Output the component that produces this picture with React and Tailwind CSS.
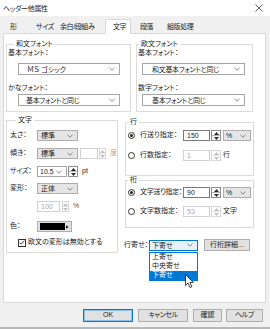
import React from "react";

const Chevron = ({ color = "#6b6b6b" }) => (
  <svg width="6" height="4" viewBox="0 0 6 4" className="shrink-0">
    <polyline points="0.5,0.8 3,3.2 5.5,0.8" fill="none" stroke={color} strokeWidth="0.8" />
  </svg>
);

function Select({ value, className = "", tone = "white" }) {
  const tones = {
    white: "bg-white border-[#a6a6a6]",
    gray: "bg-[#e5e5e5] border-[#adadad]",
    focus: "bg-[#e8f1fa] border-[#0078d7]",
  };
  return (
    <div className={`flex items-center border pr-[4px] ${tones[tone]} ${className}`}>
      <span className="min-w-0 flex-1 whitespace-nowrap text-left leading-none">{value}</span>
      <Chevron />
    </div>
  );
}

function Spin({ disabled = false, className = "" }) {
  const c = disabled ? "#c2c2c2" : "#2b2b2b";
  return (
    <div className={`flex flex-col border bg-white ${disabled ? "border-[#d6d6d6]" : "border-[#8f8f8f]"} ${className}`}>
      <div className={`flex flex-1 items-center justify-center border-b ${disabled ? "border-[#e2e2e2]" : "border-[#b5b5b5]"}`}>
        <svg width="5" height="3" viewBox="0 0 5 3"><polygon points="0,3 2.5,0 5,3" fill={c} /></svg>
      </div>
      <div className="flex flex-1 items-center justify-center">
        <svg width="5" height="3" viewBox="0 0 5 3"><polygon points="0,0 2.5,3 5,0" fill={c} /></svg>
      </div>
    </div>
  );
}

function Field({ value, disabled = false, className = "" }) {
  return (
    <div className={`flex items-center border bg-white pl-[3px] leading-none ${disabled ? "border-[#d0d0d0] text-[#a8a8a8]" : "border-[#7a7a7a] text-[#222]"} ${className}`}>
      {value}
    </div>
  );
}

function Radio({ checked = false }) {
  return (
    <span className="flex h-[7px] w-[7px] shrink-0 items-center justify-center rounded-full border border-[#333] bg-white">
      {checked && <span className="h-[3px] w-[3px] rounded-full bg-[#222]" />}
    </span>
  );
}

function Group({ title, className = "", legendClass = "ml-[6px]", children }) {
  return (
    <fieldset className={`border border-[#dcdcdc] ${className}`}>
      <legend className={`px-[2px] leading-[8px] ${legendClass}`}>{title}</legend>
      {children}
    </fieldset>
  );
}

export default function App() {
  const tabs = [
    { label: "形", cls: "w-[26px] pl-[6px]" },
    { label: "サイズ", cls: "w-[28px] pl-[6px]" },
    { label: "余白/段組み", cls: "w-[47px] pl-[2px]" },
    { label: "文字", cls: "w-[26px] pl-[7px]", active: true },
    { label: "段落", cls: "w-[30px] pl-[9px]" },
    { label: "組版処理", cls: "w-[42px] pl-[6px]" },
  ];

  return (
    <div className="flex h-[329px] w-[270px] flex-col border-b-2 border-[#b8b8b8] bg-[#f0f0f0] text-[7px] text-[#222] [font-family:'Liberation_Sans','Noto_Sans_CJK_JP',sans-serif] [font-feature-settings:'palt']">
      {/* title bar */}
      <div className="flex h-[16px] shrink-0 items-center justify-between bg-white pl-[3px] pr-[7px]">
        <span className="leading-none tracking-[-0.3px]">ヘッダー他属性</span>
        <svg width="8" height="8" viewBox="0 0 8 8">
          <path d="M0.5 0.5 L7.5 7.5 M7.5 0.5 L0.5 7.5" stroke="#333" strokeWidth="0.8" />
        </svg>
      </div>

      {/* tabs */}
      <div className="flex h-[17px] shrink-0 items-end pl-[4px] tracking-[-0.4px]">
        {tabs.map((t) =>
          t.active ? (
            <div key={t.label} className={`relative z-10 -mb-px flex h-[15px] items-center whitespace-nowrap border border-b-0 border-[#d9d9d9] bg-white ${t.cls}`}>
              {t.label}
            </div>
          ) : (
            <div key={t.label} className={`flex h-[12px] items-center whitespace-nowrap ${t.cls}`}>
              {t.label}
            </div>
          )
        )}
      </div>

      {/* panel */}
      <div className="ml-[3px] h-[270px] w-[263px] shrink-0 border border-[#d9d9d9] bg-white pl-[2px] pt-[6px]">
        {/* fonts */}
        <div className="flex gap-[5px]">
          <Group title="和文フォント" className="h-[72px] w-[125px] pl-[1px]">
            <div className="mt-[1px] leading-[8px]">基本フォント：</div>
            <Select value="ＭＳ ゴシック" className="ml-[10px] mt-[6px] h-[12px] w-[102px] pl-[8px]" />
            <div className="mt-[9px] leading-[8px]">かなフォント：</div>
            <Select value="基本フォントと同じ" className="ml-[10px] mt-[2px] h-[12px] w-[102px] pl-[7px] tracking-[-0.3px]" />
          </Group>
          <Group title="欧文フォント" legendClass="ml-[1px]" className="h-[72px] w-[117px] pl-[1px]">
            <div className="mt-[1px] leading-[8px]">基本フォント：</div>
            <Select value="和文基本フォントと同じ" className="ml-[4px] mt-[6px] h-[12px] w-[103px] pl-[9px] tracking-[-0.3px]" />
            <div className="mt-[9px] leading-[8px]">数字フォント：</div>
            <Select value="基本フォントと同じ" className="ml-[4px] mt-[2px] h-[12px] w-[103px] pl-[9px] tracking-[-0.3px]" />
          </Group>
        </div>

        <div className="mt-[4px] flex">
          {/* 文字 */}
          <Group title="文字" className="h-[137px] w-[111px] pl-[3px]">
            <div className="mt-[6px] flex h-[11px] items-center">
              <span className="w-[27px] whitespace-nowrap">太さ：</span>
              <Select value="標準" tone="gray" className="h-[11px] w-[41px] pl-[3px]" />
            </div>
            <div className="mt-[7px] flex h-[11px] items-center">
              <span className="w-[27px] whitespace-nowrap">傾き：</span>
              <Select value="標準" tone="gray" className="h-[11px] w-[41px] pl-[3px]" />
              <Field disabled className="ml-[2px] h-[11px] w-[18px]" />
              <Spin disabled className="ml-px h-[11px] w-[7px]" />
              <span className="ml-[4px] text-[#a8a8a8]">度</span>
            </div>
            <div className="mt-[7px] flex h-[11px] items-center">
              <span className="w-[27px] whitespace-nowrap tracking-[-0.3px]">サイズ：</span>
              <Select value="10.5" className="h-[11px] w-[30px] pl-[2px]" />
              <Spin className="ml-px h-[11px] w-[10px]" />
              <span className="ml-[4px]">pt</span>
            </div>
            <div className="mt-[6px] flex h-[11px] items-center">
              <span className="w-[27px] whitespace-nowrap">変形：</span>
              <Select value="正体" tone="gray" className="h-[11px] w-[41px] pl-[3px]" />
            </div>
            <div className="mt-[7px] flex h-[11px] items-center">
              <span className="w-[27px]" />
              <Field value="100" disabled className="h-[11px] w-[23px]" />
              <Spin disabled className="ml-[2px] h-[11px] w-[7px]" />
              <span className="ml-[4px] text-[#555]">%</span>
            </div>
            <div className="mt-[9px] flex h-[11px] items-center">
              <span className="w-[27px]">色：</span>
              <div className="flex h-[11px] w-[35px] items-center border border-[#adadad] bg-[#e1e1e1] px-[2px]">
                <div className="h-[7px] w-[28px] bg-black" />
                <svg width="3" height="4" viewBox="0 0 3 4" className="ml-[1px]"><polygon points="0,0 3,2 0,4" fill="#222" /></svg>
              </div>
            </div>
            <div className="mt-[6px] flex h-[9px] items-center pl-[8px]">
              <span className="flex h-[8px] w-[8px] items-center justify-center border border-[#333] bg-white">
                <svg width="6" height="5" viewBox="0 0 6 5"><polyline points="0.6,2.5 2.3,4.1 5.4,0.7" fill="none" stroke="#222" strokeWidth="0.9" /></svg>
              </span>
              <span className="ml-[2px] whitespace-nowrap">欧文の変形は無効とする</span>
            </div>
          </Group>

          {/* right column */}
          <div className="ml-[7px] flex flex-col pt-[2px]">
            <Group title="行" legendClass="ml-0" className="h-[58px] w-[129px] pl-[2px]">
              <div className="mt-[4px] flex h-[11px] items-center">
                <Radio checked />
                <span className="ml-[5px] w-[43px] whitespace-nowrap">行送り指定：</span>
                <Field value="150" className="h-[11px] w-[27px]" />
                <Spin className="ml-px h-[11px] w-[10px]" />
                <Select value="%" tone="gray" className="ml-[2px] h-[11px] w-[28px] pl-[2px]" />
              </div>
              <div className="mt-[9px] flex h-[11px] items-center">
                <Radio />
                <span className="ml-[5px] w-[43px] whitespace-nowrap">行数指定：</span>
                <Field value="1" disabled className="h-[11px] w-[27px]" />
                <Spin disabled className="ml-px h-[11px] w-[10px]" />
                <span className="ml-[2px]">行</span>
              </div>
            </Group>
            <Group title="桁" legendClass="ml-0" className="h-[52px] w-[129px] pl-[2px]">
              <div className="mt-[3px] flex h-[11px] items-center">
                <Radio checked />
                <span className="ml-[5px] w-[43px] whitespace-nowrap tracking-[-0.3px]">文字送り指定：</span>
                <Field value="90" className="h-[11px] w-[27px]" />
                <Spin className="ml-px h-[11px] w-[10px]" />
                <Select value="%" tone="gray" className="ml-[2px] h-[11px] w-[28px] pl-[2px]" />
              </div>
              <div className="mt-[8px] flex h-[11px] items-center">
                <Radio />
                <span className="ml-[5px] w-[43px] whitespace-nowrap">文字数指定：</span>
                <Field value="53" disabled className="h-[11px] w-[27px]" />
                <Spin disabled className="ml-px h-[11px] w-[10px]" />
                <span className="ml-[2px]">文字</span>
              </div>
            </Group>

            <div className="-ml-px mt-[11px] flex h-[12px] items-center">
              <span className="w-[25px] whitespace-nowrap">行寄せ：</span>
              <div className="relative">
                <Select value="下寄せ" tone="focus" className="h-[11px] w-[49px] pl-[2px]" />
                <div className="absolute left-0 top-[12px] z-20 flex h-[29px] w-[49px] flex-col border border-[#0078d7] bg-white">
                  <div className="flex h-[9px] items-center pl-[2px]">上寄せ</div>
                  <div className="flex h-[9px] items-center pl-[2px]">中央寄せ</div>
                  <div className="flex h-[9px] items-center bg-[#0078d7] pl-[2px] text-white">下寄せ</div>
                  <svg width="10" height="15" viewBox="0 0 10 15" className="absolute left-[35px] top-[21px]">
                    <path d="M0.5 0.5 L0.5 11.5 L3 9 L5 13.5 L6.8 12.7 L4.9 8.4 L8.3 8.4 Z" fill="white" stroke="#111" strokeWidth="0.8" strokeLinejoin="round" />
                  </svg>
                </div>
              </div>
              <div className="ml-[6px] flex h-[12px] w-[46px] items-center justify-center whitespace-nowrap border border-[#adadad] bg-[#e1e1e1]">
                行桁詳細...
              </div>
            </div>
          </div>
        </div>
      </div>

      {/* footer buttons */}
      <div className="flex justify-end gap-[5px] pr-[7px] pt-[6px]">
        <div className="flex h-[13px] w-[50px] items-center justify-center border border-[#0078d7] bg-[#e1e1e1] [box-shadow:inset_0_0_0_1px_#8ec0ec]">OK</div>
        <div className="flex h-[13px] w-[50px] items-center justify-center border border-[#adadad] bg-[#e1e1e1] tracking-[-0.5px]">キャンセル</div>
        <div className="flex h-[13px] w-[29px] items-center justify-center border border-[#adadad] bg-[#e1e1e1]">確認</div>
        <div className="ml-[-1px] flex h-[13px] w-[37px] items-center justify-center border border-[#adadad] bg-[#e1e1e1] tracking-[-0.3px]">ヘルプ</div>
      </div>
    </div>
  );
}
